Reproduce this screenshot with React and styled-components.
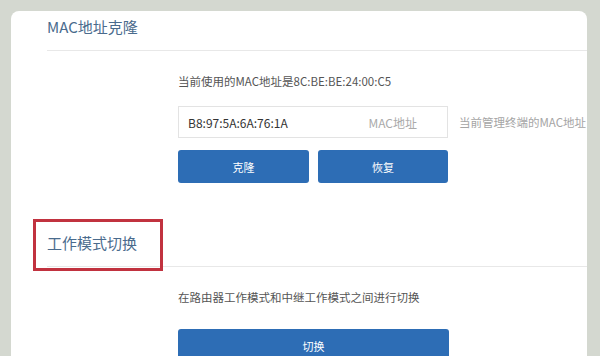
import React from 'react'
import styled, { createGlobalStyle } from 'styled-components'

const GlobalStyle = createGlobalStyle`
	html, body {
		margin: 0;
		padding: 0;
		background: #d4d8d0;
		overflow: hidden;
	}
	body {
		font-family: "Noto Sans CJK SC", "Noto Sans", sans-serif;
	}
`

const Card = styled.div`
	margin: 11px 13px 0 11px;
	height: 345px;
	background: #fff;
	border-radius: 8px 8px 0 0;
	padding-left: 36px;
	overflow: hidden;
`

const Section = styled.section`
	margin-bottom: ${props => props.gap || 0}px;
`

const Header = styled.div`
	position: relative;
	padding: 6px 0 13px;
	border-bottom: 1px solid #e8e8e8;
`

const Title = styled.h2`
	margin: 0;
	font-size: 15px;
	line-height: 20px;
	font-weight: 400;
	color: #4a6b8d;
`

// red annotation frame drawn over the heading
const Highlight = styled.div`
	position: absolute;
	left: -14px;
	top: -8px;
	width: 130px;
	height: 52px;
	box-sizing: border-box;
	border: 3px solid #c1323f;
`

const Body = styled.div`
	padding-left: 131px;
	padding-top: 22px;
`

const Desc = styled.p`
	margin: 0 0 ${props => props.after}px;
	font-size: 11.5px;
	line-height: 16px;
	color: #555;
	white-space: nowrap;
`

const InputRow = styled.div`
	display: flex;
	align-items: center;
	gap: 11px;
`

const InputBox = styled.div`
	display: flex;
	align-items: center;
	width: 270px;
	height: 32px;
	box-sizing: border-box;
	border: 1px solid #e3e3e3;
	padding: 0 30px 0 9px;
	font-size: 12px;
	color: #333;
`

const Suffix = styled.span`
	margin-left: auto;
	color: #aaa;
`

const Hint = styled.span`
	font-size: 11.5px;
	color: #a5a5a5;
	white-space: nowrap;
`

const ButtonRow = styled.div`
	display: flex;
	gap: 9px;
	margin-top: 12px;
`

const Button = styled.button`
	width: ${props => props.w}px;
	height: 33px;
	border: none;
	border-radius: 3px;
	background: #2d6db5;
	color: #fff;
	font-family: inherit;
	font-size: 11px;
	padding: 0;
`

export default function App() {
	return (
		<>
			<GlobalStyle />
			<Card>
				<Section gap={44}>
					<Header>
						<Title>MAC地址克隆</Title>
					</Header>
					<Body>
						<Desc after={17}>当前使用的MAC地址是8C:BE:BE:24:00:C5</Desc>
						<InputRow>
							<InputBox>
								B8:97:5A:6A:76:1A
								<Suffix>MAC地址</Suffix>
							</InputBox>
							<Hint>当前管理终端的MAC地址</Hint>
						</InputRow>
						<ButtonRow>
							<Button w={131}>克隆</Button>
							<Button w={130}>恢复</Button>
						</ButtonRow>
					</Body>
				</Section>
				<Section>
					<Header>
						<Title>工作模式切换</Title>
						<Highlight />
					</Header>
					<Body>
						<Desc after={24}>在路由器工作模式和中继工作模式之间进行切换</Desc>
						<Button w={271}>切换</Button>
					</Body>
				</Section>
			</Card>
		</>
	)
}
